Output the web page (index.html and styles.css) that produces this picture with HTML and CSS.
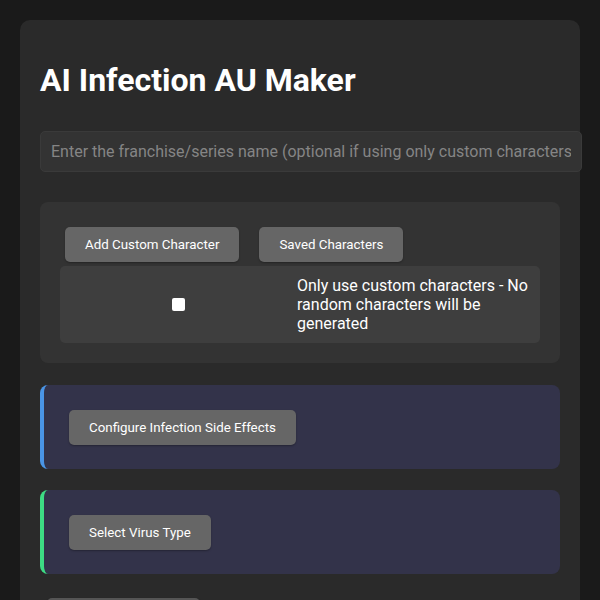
FILE: index.html
```html
<!DOCTYPE html>
<html lang="en">
  <head>
    <meta charset="UTF-8" />
    <meta name="viewport" content="width=device-width, initial-scale=1.0" />
    <title>AI Infection AU Maker</title>
    <link rel="stylesheet" href="styles.css">
  </head>
  <body>
    <div class="container">
      <h1>AI Infection AU Maker</h1>
      <input type="text" id="franchise" class="franchise-input" placeholder="Enter the franchise/series name (optional if using only custom characters)" />

      <div class="character-section">
        <div class="character-buttons">
          <button class="btn">Add Custom Character</button>
          <button class="btn">Saved Characters</button>
        </div>
        <label class="custom-only">
          <input type="checkbox" id="customOnly" />
          <span>Only use custom characters - No random characters will be generated</span>
        </label>
      </div>

      <div class="option-section side-effects">
        <button class="btn">Configure Infection Side Effects</button>
      </div>

      <div class="option-section virus-type">
        <button class="btn">Select Virus Type</button>
      </div>

      <button class="btn generate-button">Generate AU</button>
    </div>
  </body>
</html>
```

FILE: styles.css
```css
body {
  font-family: Roboto, "Liberation Sans", Arial, sans-serif;
  background-color: #1a1a1a;
  color: #fff;
  margin: 0;
  padding: 20px;
}
.container {
  background-color: #2a2a2a;
  border-radius: 10px;
  padding: 20px;
}
h1 {
  font-size: 2em;
  margin: 0.67em 0 32px;
  color: #fff;
}
.franchise-input {
  width: 100%;
  padding: 10px;
  margin: 0;
  font-family: inherit;
  font-size: 16px;
  color: #ddd;
  background-color: #333;
  border: 1px solid #3a3a3a;
  border-radius: 5px;
  display: block;
}
.franchise-input::placeholder {
  color: #858585;
}
.character-section {
  background-color: #333;
  border-radius: 8px;
  padding: 20px;
  margin-top: 30px;
}
.character-buttons {
  display: flex;
  gap: 20px;
  padding: 5px 5px 0;
}
.btn {
  font-family: inherit;
  font-size: 13.333px;
  color: #fff;
  background-color: #666;
  border: none;
  border-radius: 5px;
  padding: 10px 20px;
  box-shadow: 0 1px 2px rgba(0, 0, 0, 0.3);
  cursor: pointer;
}
.btn:hover {
  background-color: #777;
}
.custom-only {
  display: grid;
  grid-template-columns: 237px 1fr;
  align-items: center;
  background-color: #3e3e3e;
  border-radius: 5px;
  padding: 10px 0;
  margin-top: 4px;
  font-size: 16px;
  line-height: 19px;
}
.custom-only input {
  appearance: none;
  justify-self: center;
  width: 13px;
  height: 13px;
  margin: 0;
  background-color: #fff;
  border-radius: 2px;
}
.option-section {
  background-color: #33334a;
  border-radius: 8px;
  padding: 25px 20px 24px;
  margin-top: 22px;
}
.option-section .btn {
  margin-left: 5px;
}
.side-effects {
  border-left: 4px solid #4a95e6;
}
.virus-type {
  margin-top: 21px;
  border-left: 4px solid #3ddc84;
}
.generate-button {
  margin: 24px 0 0 7px;
  width: 153px;
  background-color: #555;
}
```
